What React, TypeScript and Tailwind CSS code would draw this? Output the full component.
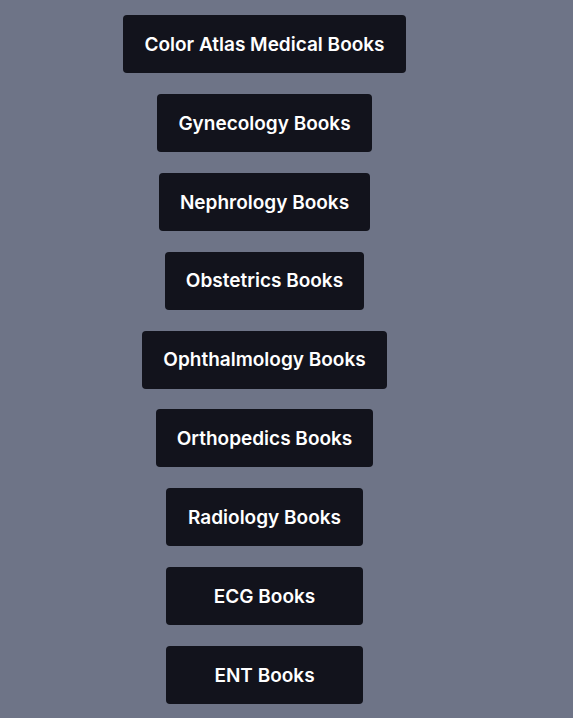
const categories = [
  "Color Atlas Medical Books",
  "Gynecology Books",
  "Nephrology Books",
  "Obstetrics Books",
  "Ophthalmology Books",
  "Orthopedics Books",
  "Radiology Books",
  "ECG Books",
  "ENT Books",
];

export default function App() {
  return (
    <div className="min-h-screen bg-[#6e7487] font-['Inter',sans-serif]">
      <div className="w-[529px] flex flex-col items-center gap-[20.875px] pt-[15px] pb-4">
        {categories.map((name) => (
          <a
            key={name}
            href="#"
            className="h-[58px] min-w-[197px] px-[21px] pt-[2px] flex items-center justify-center rounded-[4px] bg-[#12131c] text-white text-[19px] font-semibold"
          >
            {name}
          </a>
        ))}
      </div>
    </div>
  );
}
